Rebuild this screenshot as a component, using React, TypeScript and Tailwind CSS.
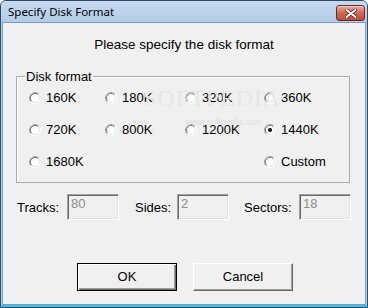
import React from 'react';

const font = { fontFamily: '"Liberation Sans", Arial, sans-serif' };

const formats = [
  ['160K', '180K', '320K', '360K'],
  ['720K', '800K', '1200K', '1440K'],
  ['1680K', '', '', 'Custom'],
];

function Radio({ checked }: { checked?: boolean }) {
  return (
    <svg width="12" height="12" viewBox="0 0 12 12" className="shrink-0">
      <circle cx="6" cy="6" r="5" fill="#fff" />
      <path d="M2.11 9.89 A5.5 5.5 0 0 1 9.89 2.11" fill="none" stroke="#a0a0a0" strokeWidth="1" />
      <path d="M9.89 2.11 A5.5 5.5 0 0 1 2.11 9.89" fill="none" stroke="#ffffff" strokeWidth="1" />
      <path d="M2.82 9.18 A4.5 4.5 0 0 1 9.18 2.82" fill="none" stroke="#7a7a7a" strokeWidth="1" />
      <path d="M9.18 2.82 A4.5 4.5 0 0 1 2.82 9.18" fill="none" stroke="#e3e3e3" strokeWidth="1" />
      {checked && <circle cx="6" cy="6" r="2" fill="#000" />}
    </svg>
  );
}

function Field({ value }: { value: string }) {
  return (
    <div className="w-[52px] h-[26px] bg-[#f0f0f0] border border-t-[#a0a0a0] border-l-[#a0a0a0] border-r-white border-b-white shadow-[inset_1px_1px_0_#696969,inset_-1px_-1px_0_#e3e3e3] pl-[3px] pt-[1px] text-[13px] leading-[16px] text-[#8e8e8e]">
      {value}
    </div>
  );
}

export default function App() {
  return (
    <div
      className="w-[368px] h-[308px] flex flex-col border border-[#2f4b6c] rounded-t-[6px] bg-[#b4cde8] overflow-hidden relative"
      style={font}
    >
      {/* title bar */}
      <div className="h-[21px] shrink-0 flex items-center justify-between pl-[7px] pr-[2px] bg-gradient-to-b from-[#c6daef] to-[#b3cce7]">
        <span className="text-[11.5px] text-black" style={{ fontFamily: '"Noto Sans", "Liberation Sans", sans-serif' }}>
          Specify Disk Format
        </span>
        <div className="w-[29px] h-[16px] mt-[3px] rounded-[3px] border border-[#6e2a22] bg-gradient-to-b from-[#e7aa9f] via-[#cf6a58] to-[#c04a36] flex items-center justify-center shadow-[inset_0_1px_0_#f4cfc7]">
          <svg width="12" height="9" viewBox="0 0 12 9">
            <path d="M1.5 1 L10.5 8 M10.5 1 L1.5 8" stroke="#5a2a25" strokeWidth="3.6" strokeLinecap="round" />
            <path d="M1.5 1 L10.5 8 M10.5 1 L1.5 8" stroke="#fff" strokeWidth="2" strokeLinecap="round" />
          </svg>
        </div>
      </div>

      {/* client */}
      <div className="flex-1 mx-[1px] border border-[#7d9cc0] bg-[#f0f0f0] flex flex-col text-black text-[13px]">
        <div className="mt-[14px] h-[16px] leading-[16px] text-center text-[13.5px]">
          Please specify the disk format
        </div>

        <div className="relative ml-[13px] mt-[23px] w-[334px] h-[107px] border border-[#aaaaaa] shadow-[inset_1px_1px_0_#ffffff] pl-[12px] pt-[5px]">
          <span className="absolute -top-[8px] left-[8px] px-[1px] bg-[#f0f0f0] leading-[16px]">Disk format</span>
          <div className="grid grid-cols-[76px_80px_79px_1fr]">
            {formats.flat().map((f, i) => (
              <div key={i} className="h-[32px] flex items-center gap-[5px]">
                {f && (
                  <>
                    <Radio checked={f === '1440K'} />
                    <span className="leading-[16px]">{f}</span>
                  </>
                )}
              </div>
            ))}
          </div>
        </div>

        <div className="mt-[11px] flex items-start">
          <span className="ml-[14px] w-[50px] leading-[16px] mt-[6px]">Tracks:</span>
          <Field value="80" />
          <span className="ml-[16px] w-[42px] leading-[16px] mt-[6px]">Sides:</span>
          <Field value="2" />
          <span className="ml-[15px] w-[55px] leading-[16px] mt-[6px]">Sectors:</span>
          <Field value="18" />
        </div>

        <div className="mt-[43px] pl-[74px] flex gap-[16px]">
          <button className="w-[100px] h-[28px] bg-[#f0f0f0] border border-[#000] shadow-[inset_1px_1px_0_#ffffff,inset_-1px_-1px_0_#696969,inset_-2px_-2px_0_#a0a0a0] text-[13px] leading-[16px]">
            OK
          </button>
          <button className="w-[100px] h-[28px] bg-[#f0f0f0] border border-t-white border-l-white border-r-[#696969] border-b-[#696969] shadow-[inset_-1px_-1px_0_#a0a0a0] text-[13px] leading-[16px]">
            Cancel
          </button>
        </div>
      </div>
      <div className="h-[2px] shrink-0 bg-[#3ec3e4]" />

      {/* watermark */}
      <div className="absolute left-[142px] top-[84px] pointer-events-none select-none text-[24px] leading-[26px] text-[#e6e6e6] tracking-[1px]" style={{ fontFamily: '"Liberation Serif", serif' }}>
        SOFTPEDIA
      </div>
      <div className="absolute left-[184px] top-[116px] pointer-events-none select-none text-[9px] leading-[10px] text-[#dedede]">
        www.softpedia.com
      </div>
    </div>
  );
}
